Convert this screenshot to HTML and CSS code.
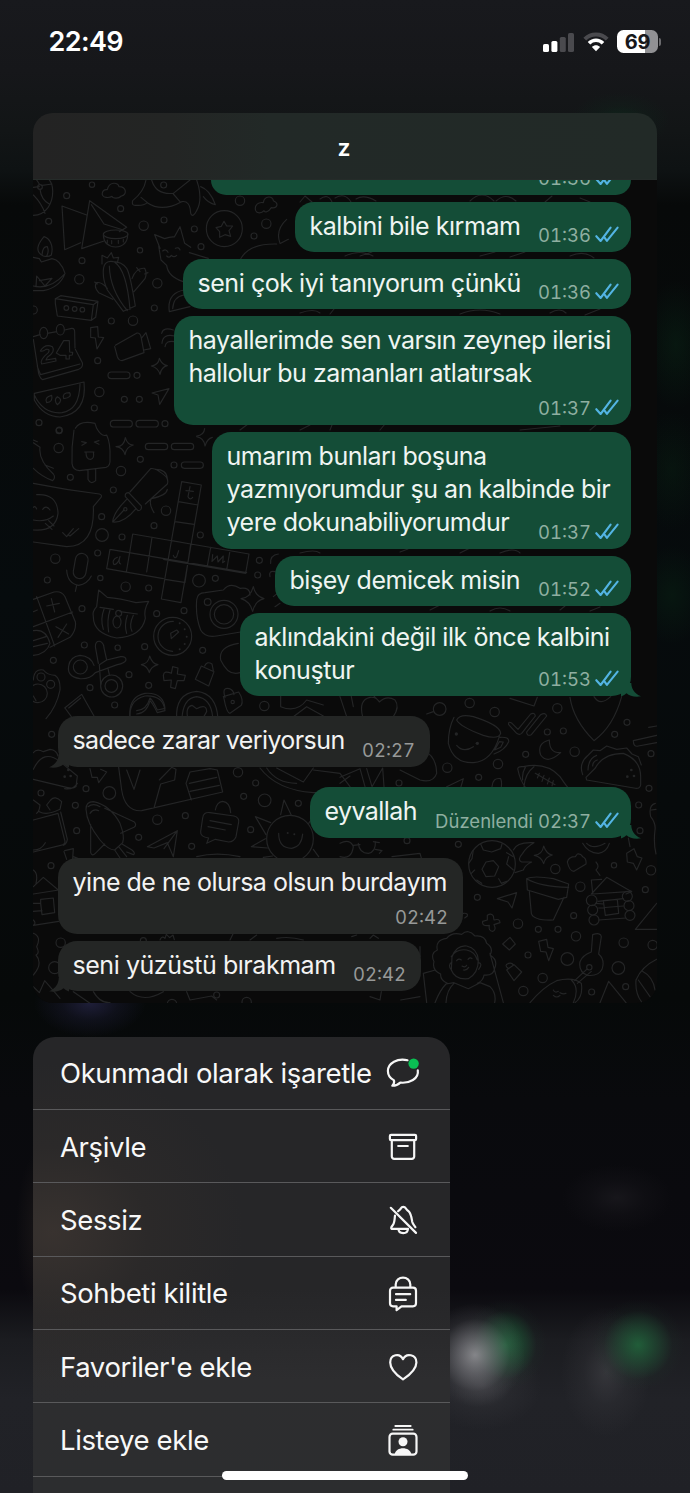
FILE: index.html
```html
<!DOCTYPE html>
<html lang="tr">
<head>
<meta charset="utf-8">
<title>Sohbet</title>
<link rel="stylesheet" href="styles.css">
</head>
<body>
<svg class="defs" width="0" height="0">
  <defs>
    <symbol id="ticks" viewBox="0 0 24 17"><path d="M1.3 10.2 5.6 15 15.6 1.6M9.6 11.6l2.3 3.2L22.6 1.6" fill="none" stroke="#53b4e3" stroke-width="2.1" stroke-linecap="round" stroke-linejoin="round"/></symbol>
    <symbol id="tail" viewBox="0 0 20 24"><path d="M0 10H10.300C10.300 15 13 20.500 20 23.300 14 24.500 8.500 23 5.500 20.200 3 22.500 0 23.500 0 23.500Z"/></symbol>
  </defs>
</svg>
<div class="screen">
  <header class="status">
    <span class="clock">22:49</span>
    <span class="indicators">
      <svg width="31" height="20" viewBox="0 0 31 20"><g fill="#fff"><rect x="0" y="12" width="6" height="8" rx="1.600"/><rect x="8.400" y="9" width="6" height="11" rx="1.600"/></g><g fill="#4a4a4e"><rect x="16.800" y="5" width="6" height="15" rx="1.600"/><rect x="25" y="1" width="6" height="19" rx="1.600"/></g></svg>
      <svg class="wifi" width="26" height="20" viewBox="0 0 26 20" fill="none"><path d="M1.800 7.200C8 .9 18 .9 24.200 7.200" stroke="#4a4a4e" stroke-width="4"/><path d="M6 11.300c4-4 10-4 14 0" stroke="#fff" stroke-width="3.600"/><path d="M8.900 14.900c2.400-2.100 5.800-2.100 8.200 0L13 19.300Z" fill="#fff"/></svg>
      <span class="battery"><span>69</span></span><i class="nub"></i>
    </span>
  </header>

  <section class="preview">
    <h1 class="title">z</h1>
    <div class="chat">
      <svg class="wallpaper" viewBox="33 180 624 823" width="624" height="823">
        <g id="doodles" class="ink">
          <g transform="translate(30 180) scale(.33333)">
            <path d="M10 106C48 105 70 70 68 30Q67 10 58 0M10 45Q35 70 45 100M10 22 28 20M35 16Q50 15 66 12M30 28Q34 60 58 72M28 12 20 0"/><circle cx="30" cy="21" r="7"/>
            <path d="M228 52C210 50 215 27 232 29 237 5 265 5 267 20 290 20 292 45 274 48 265 58 248 55 246 49 240 53 235 53 228 52Z"/>
            <path d="M348 0Q342 35 308 62Q304 78 318 76Q340 78 352 68Q395 98 455 65Q480 60 482 100Q488 115 500 92Q516 65 506 20L500 0M333 52 355 70M365 0Q378 45 430 40L480 0M430 42 450 65M512 20Q540 30 556 74Q535 70 520 50"/>
            <path d="M96 78 104 209 152 188M96 78 170 105M179 62 155 206 222 183M179 62 290 142 268 155M184 74 222 132 280 150"/><ellipse cx="257" cy="163" rx="37" ry="13"/><path d="M220 166Q222 200 257 201 292 198 293 164M232 180v8M245 182v9M265 181v9M280 178v8"/>
            <circle cx="583" cy="146" r="54"/><path d="m582 124 8 14 18 0-11 14 5 17-17-5-16 8 0-17-11-12 16-4Z"/>
            <path d="M390 205 374 164 404 176Q420 170 433 171L450 140 464 190 482 202M386 198 393 240 410 256Q414 290 460 305M478 218 535 235M398 213q10-8 16 4M436 205q10-5 14 5M410 228q8 8 14-2 8 8 16 0"/>
            <path d="M677 92C672 75 686 65 700 68 703 45 730 48 730 62 748 70 742 86 724 83 714 98 705 98 702 92 694 102 680 100 677 92Z"/>
            <path d="M40 228C12 215 25 190 42 170 58 175 72 195 64 225Q55 232 40 228ZM36 225Q38 198 52 200 58 215 50 228M10 232 28 236 34 246 66 236Q92 240 105 280 90 322 40 332H10M10 318Q60 330 102 284M18 320 20 288 45 318 66 295 28 302"/>
            <path d="M216 252V226L232 234 244 218 250 234 266 232 262 248M220 270Q222 240 250 245 275 245 290 265 300 280 316 378L280 394 232 330Q218 300 220 270M238 258Q240 330 292 392M254 247Q290 270 300 388M306 296Q318 262 344 265 352 280 345 296L312 335M248 358 206 338Q190 320 200 308 215 305 232 325M330 275l-10-12M344 282l10-4M202 312l-8-6"/>
            <path d="M76 370 82 408 184 421 190 374 76 356ZM76 356 92 347 204 364 197 412 184 421M190 374 204 364"/><circle cx="109" cy="384" r="7"/><circle cx="134" cy="387" r="7"/><circle cx="157" cy="389" r="7"/>
            <path d="M10 470 30 464M52 460 80 455M104 450 125 445Q135 444 134 460L135 504M10 478 24 568Q26 592 38 599L146 568Q160 562 157 548L136 508M22 560 32 584 150 552"/><ellipse cx="41" cy="459" rx="12" ry="17"/><ellipse cx="91" cy="449" rx="12" ry="16"/>
            <path d="M31 513Q45 490 67 500 78 515 52 532L48 540 77 535 78 543 35 552Q28 540 55 518 62 506 48 508 38 516 31 513ZM90 526 79 519 101 482H118L119 516 128 517 127 525 118 526V537H108V526Z"/>
            <path d="m182 443 21-3 2 31 16 2-20 34-5-33-14-2ZM256 496 321 459Q330 458 333 470L342 518 276 542Q266 542 262 530L254 500M334 475 348 458 362 506 342 510M364 558q22-4 24-23 8 20 24 22-18 4-22 26-6-20-26-25Z"/>
            <rect x="234" y="576" width="66" height="20" rx="10"/><rect x="241" y="721" width="66" height="20" rx="10"/><rect x="318" y="721" width="67" height="20" rx="10"/>
            <path d="m366 639 51-13-28 47-5-28ZM13 640 162 606Q172 700 90 711 40 710 13 660ZM13 645Q40 703 96 698 148 690 150 612M50 668q-8-16 15-22 5 20-15 22ZM82 674q-12-15 0-24 20 10 0 24ZM101 656q-6-18 18-18 8 15-18 18Z"/>
            <path d="M418 395Q410 340 462 330M418 395 480 380M428 386Q430 350 462 345M395 460Q400 440 430 450M396 490Q398 460 434 468M405 500Q408 480 434 485M750 190Q735 150 770 118M752 190 775 178M628 245Q650 190 740 192"/>
            <circle cx="186" cy="14" r="8"/><circle cx="401" cy="15" r="9"/><circle cx="110" cy="47" r="9"/><circle cx="272" cy="86" r="9"/><circle cx="56" cy="124" r="9"/><circle cx="341" cy="137" r="14"/><circle cx="402" cy="120" r="9"/><circle cx="493" cy="147" r="9"/><circle cx="630" cy="62" r="14"/><circle cx="709" cy="131" r="14"/><circle cx="672" cy="168" r="9"/><circle cx="513" cy="200" r="9"/><circle cx="330" cy="211" r="8"/><circle cx="156" cy="242" r="9"/><circle cx="148" cy="298" r="14"/><circle cx="382" cy="310" r="14"/><circle cx="373" cy="384" r="9"/><circle cx="10" cy="390" r="12"/><circle cx="309" cy="422" r="14"/><circle cx="244" cy="423" r="9"/><circle cx="203" cy="542" r="9"/><circle cx="321" cy="586" r="9"/><circle cx="208" cy="636" r="14"/><circle cx="283" cy="658" r="9"/><circle cx="328" cy="658" r="9"/><circle cx="193" cy="684" r="9"/><circle cx="27" cy="728" r="9"/><circle cx="88" cy="750" r="9"/><circle cx="405" cy="731" r="9"/>
          </g>
          <g transform="translate(30 430) scale(.33333)">
            <path d="M132 0Q124 50 126 100 128 120 148 122L228 112Q242 108 240 85 242 40 230 15 215 22 200 -5L195 -20Q150 -30 136 -5M174 120V148Q182 165 197 152V117M155 35l14 3-13 8M207 32l-14 4 14 7M164 66h28M168 68q0 20 14 20 12-2 8-22"/>
            <path d="M10 38 30 52Q25 90 70 132 78 142 68 152 35 140 10 115M45 105 70 115M10 30 22 35"/>
            <path d="m258 50q24 1 28-27 6 22 24 22-22 6-25 29-6-22-27-24ZM500 18q22-2 24-22M500 20q22 4 25 28 6-22 22-26"/>
            <rect x="346" y="40" width="67" height="19" rx="9"/><rect x="424" y="40" width="67" height="19" rx="9"/><rect x="454" y="96" width="66" height="19" rx="9"/>
            <path d="M10 160Q110 180 208 192 220 196 210 206L190 230Q195 350 110 350L10 336M20 194Q82 190 84 250 78 305 10 300M10 232q6-6 10 5M38 238q10-14 22 2M10 270Q45 278 70 258M46 280l20 18M56 272l16 16M98 308l12 12 20-24M114 314l6 4 26-22"/>
            <path d="M300 186 362 116Q376 112 408 140 416 150 412 162L346 222M286 200Q284 188 296 188L334 228Q336 242 324 242ZM290 208Q250 248 248 276 282 280 318 236M250 274 282 240M376 118Q410 118 412 146M412 178Q410 196 364 206 355 220 372 248"/><circle cx="286" cy="238" r="5"/>
            <path d="M455 155 514 165 453 518 394 507ZM445 215 504 225M435 275 492 283M425 332 482 342M405 448 463 457M308 312 657 372 647 430 400 388M308 312 299 368M366 322 350 426M240 358 650 428M240 358 230 416 400 446M299 368 289 426M542 352 532 408M600 362 590 420M482 342 465 457"/>
            <path class="fine" d="M480 170 474 200Q480 212 488 202M468 182 490 184M446 362 440 380Q434 388 430 376M262 382Q244 390 252 404 264 404 270 380 264 400 272 402M548 374 546 394 562 378 564 396 580 378 578 398 584 394"/>
            <rect x="133" y="370" width="38" height="76" rx="19" transform="rotate(10 152 408)"/><path d="M110 420Q112 460 146 466 172 462 184 438M140 466 136 484"/>
            <path d="M200 530 206 480 232 502Q270 505 318 518L356 514Q340 540 346 565 335 620 260 624 190 610 190 560 186 545 200 530ZM210 532 250 538M270 545 322 552M222 538q-12 30-2 60M240 540q-10 30-4 66M292 556q-10 30-2 54M310 556q-14 30-4 48"/><circle cx="266" cy="550" r="9"/><ellipse cx="261" cy="576" rx="12" ry="18"/>
            <path d="M10 508 72 486Q95 482 105 500L136 575Q140 600 120 622L60 652M20 500 74 648M10 590 128 546M50 528 88 520M64 506 74 546M78 590 116 612M110 582 84 622M10 545 22 540M10 602Q48 595 60 640 50 672 10 676M10 632 48 620M10 650 52 640"/>
            <circle cx="428" cy="619" r="57"/><path d="M430 574A45 45 0 1 0 428 664M424 626 422 610 440 600 446 606Z"/><g class="dot"><circle cx="449" cy="580" r="3"/><circle cx="464" cy="598" r="3"/><circle cx="470" cy="620" r="3"/><circle cx="464" cy="642" r="3"/><circle cx="449" cy="658" r="3"/></g>
            <path d="M500 510Q502 488 525 488L580 480Q600 455 630 475 660 470 660 495M500 510Q496 560 512 600 525 624 560 618L632 606M633 506q28-2 37-36 6 28 32 36-26 6-34 38-8-30-35-38Z"/><circle cx="582" cy="553" r="42"/><circle cx="582" cy="553" r="29"/><circle cx="533" cy="516" r="10"/>
            <path d="M205 700 196 650Q196 632 210 634 222 640 222 654L230 690 272 680Q288 678 288 690 284 700 262 704L196 728Q180 748 150 746 110 740 116 708 120 680 150 676 182 678 192 706M230 690 208 704 212 762M234 716 238 734"/><circle cx="151" cy="711" r="21"/><circle cx="245" cy="768" r="33"/><circle cx="244" cy="768" r="19"/>
            <path d="M334 704q22-4 25-26 8 24 25 26-22 6-26 24-6-20-24-24ZM400 736q2-16 24-6l4-20 16 4-2 18 24 4-4 16-20 0-6 24-14-4 2-22-22 2Z"/>
            <path d="M514 708 552 725 536 768 496 748ZM524 708Q530 692 546 702L550 722M548 500M572 690Q565 650 625 640M572 690Q595 740 630 728M580 800 626 786Q642 810 634 826L600 850Q590 850 582 806ZM585 802Q575 770 598 776 610 780 612 794"/><circle cx="608" cy="816" r="5"/>
            <path d="M10 750Q12 715 40 720 52 735 75 736 92 748 90 780 80 830 48 866M10 798 18 812"/><circle cx="33" cy="741" r="12"/><circle cx="62" cy="763" r="12"/><circle cx="24" cy="790" r="28"/>
            <path d="M104 834 155 793 192 858M116 834 152 804M105 834 130 868M300 868Q295 810 345 798 400 795 405 842L382 848Q368 820 360 812 350 850 320 852M440 868Q435 790 500 784 560 790 564 868M456 868Q458 805 500 800 542 805 548 860M474 868Q465 830 486 826L500 836Q530 820 530 845L518 866"/>
            <circle cx="86" cy="54" r="14"/><circle cx="87" cy="2" r="9"/><circle cx="331" cy="88" r="9"/><circle cx="273" cy="123" r="14"/><circle cx="432" cy="105" r="9"/><circle cx="121" cy="142" r="9"/><circle cx="250" cy="180" r="9"/><circle cx="408" cy="242" r="14"/><circle cx="215" cy="260" r="9"/><circle cx="372" cy="287" r="9"/><circle cx="216" cy="315" r="19"/><circle cx="276" cy="321" r="9"/><circle cx="511" cy="315" r="9"/><circle cx="203" cy="369" r="9"/><circle cx="76" cy="386" r="14"/><circle cx="52" cy="450" r="9"/><circle cx="211" cy="444" r="8"/><circle cx="287" cy="470" r="14"/><circle cx="356" cy="474" r="9"/><circle cx="507" cy="452" r="19"/><circle cx="556" cy="445" r="9"/><circle cx="688" cy="391" r="9"/><circle cx="683" cy="435" r="9"/><circle cx="156" cy="536" r="9"/><circle cx="380" cy="551" r="9"/><circle cx="462" cy="542" r="9"/><circle cx="163" cy="645" r="9"/><circle cx="263" cy="653" r="8"/><circle cx="344" cy="650" r="9"/><circle cx="518" cy="661" r="9"/><circle cx="70" cy="691" r="9"/><circle cx="297" cy="734" r="9"/><circle cx="180" cy="773" r="9"/><circle cx="356" cy="766" r="9"/><circle cx="254" cy="825" r="9"/><circle cx="703" cy="828" r="14"/>
            <path d="M722 400Q720 375 745 372M720 440Q715 420 735 425M730 500 745 488M735 530 750 520"/>
          </g>
        </g>
        <g class="right-copy"><use href="#doodles" x="563"/></g>
        <g class="ink" transform="translate(30 690) scale(.33333)">
          <path d="M10 188Q20 175 40 185L60 178Q80 180 84 198M10 238Q40 175 90 215L142 258 138 290Q130 298 110 292L10 268M104 296Q130 300 142 280M180 236 186 262 202 262 206 278 230 246 212 238M266 232 275 300Q285 365 335 362L578 306 562 240 540 236 480 246 468 280 484 330M290 240 312 298 330 240M388 270 425 232 438 238 434 270 392 282 372 354M478 280 560 262M480 304 568 286M10 330 30 345Q28 365 20 370M28 365Q50 378 90 358L95 335Q75 315 62 330L50 345 60 360M10 390 84 370 104 450Q108 464 92 466L10 486M92 366 112 448Q110 462 100 466M10 480Q34 480 46 458"/>
          <path d="M168 358Q168 335 190 335 240 345 270 400 285 440 278 458L254 480Q235 480 210 450 170 400 168 358ZM180 370Q190 355 206 362M174 350Q190 338 210 350M224 355 312 395Q322 405 312 412L272 430M182 404V488Q186 500 196 490L224 462M254 480 270 504M266 470 290 500M276 462 306 480Q318 490 310 494L290 486"/>
          <path d="m352 470 90-48-12 78-18-42-40 16ZM442 422 402 476M518 384Q520 365 540 368L612 378Q628 382 626 396L618 440Q612 455 596 456L556 448 530 460 536 444Q510 440 512 424ZM540 392 604 404M534 410 586 420M556 360Q560 336 578 334 600 336 602 368"/>
          <circle cx="780" cy="446" r="70"/><path d="M746 430Q746 475 785 475 815 470 818 432M752 374 762 330 784 376M722 398 676 380 708 434M706 446 664 470 712 474M836 400 850 380M728 498 700 502M850 478 866 500"/><g class="dot"><circle cx="773" cy="429" r="3"/><circle cx="793" cy="433" r="3"/></g>
          <path d="M690 234Q740 300 850 308H930M710 234Q740 280 800 280M740 234 820 276 850 234M850 240 930 250 960 290M500 500Q560 485 630 500M104 482 130 476 128 506M102 485 110 508M130 500 145 506M10 540Q25 550 18 580M10 590 40 562 85 600M10 612 86 600M10 640 32 640 32 628 70 624 74 668 36 674 32 640M10 664 36 662M10 690Q20 700 10 706L86 694M10 730Q35 740 20 770 30 790 18 795 40 820 10 855M10 890 28 908 44 872 90 925M130 905 180 940M190 905Q210 940 240 938M300 905Q340 940 400 905M470 905 480 930 545 918 560 930M600 750 610 730M660 750 680 735M740 745Q780 738 820 750M390 750q5-14 15-5l4-12 10 10 10-8 4 14"/>
          <path d="M300 80Q295 20 345 10 400 6 405 55L382 60Q368 30 360 24 350 60 320 62M752 18V50Q800 70 830 30L880 45M790 80 830 50 880 78"/>
          <circle cx="65" cy="133" r="9"/><circle cx="33" cy="309" r="9"/><circle cx="168" cy="296" r="9"/><circle cx="238" cy="309" r="19"/><circle cx="136" cy="346" r="9"/><circle cx="140" cy="422" r="9"/><circle cx="382" cy="389" r="14"/><circle cx="466" cy="377" r="9"/><circle cx="326" cy="442" r="9"/><circle cx="485" cy="469" r="9"/><circle cx="624" cy="247" r="14"/><circle cx="677" cy="279" r="9"/><circle cx="641" cy="319" r="9"/><circle cx="704" cy="331" r="19"/><circle cx="805" cy="340" r="9"/><circle cx="662" cy="419" r="9"/><circle cx="63" cy="527" r="9"/><circle cx="92" cy="758" r="14"/><circle cx="74" cy="833" r="18"/><circle cx="340" cy="752" r="9"/><circle cx="426" cy="942" r="14"/><circle cx="650" cy="936" r="14"/><circle cx="560" cy="915" r="9"/>
          <g class="dot"><circle cx="115" cy="240" r="4"/><circle cx="104" cy="260" r="4"/><circle cx="122" cy="258" r="4"/></g>
        </g>
        <g class="ink" transform="translate(340 690) scale(.33333)">
          <path d="M68 80Q55 30 90 22 108 20 118 36 140 15 165 30 180 50 160 80M92 8 118 35M30 0 40 50M0 20 20 80M260 72 280 65"/>
          <path d="M350 90Q360 70 400 80 480 105 482 130 475 150 430 136 360 110 350 90ZM342 82Q325 115 325 160 340 220 400 218 455 215 478 140M480 142Q508 140 506 155 495 180 462 192M478 155 490 156 482 172 464 180ZM350 166Q370 190 400 170"/>
          <path d="M506 104Q504 92 516 100L534 118 572 72Q584 66 586 78L545 130Q538 136 530 130ZM560 126 602 74Q616 66 620 78L574 134Q560 140 560 126ZM628 150Q590 160 602 195 622 224 662 188 628 190 628 150M510 25 582 48 592 22M690 22Q700 90 762 152 820 110 845 20M762 20Q780 50 812 20"/>
          <path d="M926 112 950 108M880 152 950 136M880 152Q880 172 895 168L950 158"/>
          <path d="M728 254Q715 220 745 195L760 180 780 182 800 168 830 178 860 174 876 192 895 200 904 225M738 262 766 234Q790 190 850 190 902 210 902 260V285Q900 298 882 294L740 270ZM744 240Q745 205 770 196M758 228Q758 214 772 210"/>
          <path d="M534 240Q530 228 550 230 620 215 660 260 680 290 690 300M534 240Q540 270 555 290M556 232Q545 250 548 270M582 230Q555 250 552 290M586 250 645 284M598 250l-6 14M612 256l-6 18M628 264l-6 18M640 272l-4 16M250 180Q290 200 290 250 280 280 240 270L180 240M320 290 370 266 360 300M456 290Q458 262 482 266 486 275 484 290M0 262 60 236 75 290M80 236 96 290 128 234 132 290M0 280 30 258"/>
          <circle cx="456" cy="522" r="70"/><path d="M438 516 460 512 476 530 464 558 438 560 426 538ZM422 462 430 480 455 486 482 476 486 462M400 480 396 506 386 520M404 540 394 550M410 570 425 580M500 488 520 500M506 500 500 522 520 540M476 566 484 580 500 574M520 480Q530 455 582 458 560 470 548 490 530 510 545 516H575Q555 525 550 540L525 548M583 496q24-2 28-28 8 24 26 27-22 6-26 26-6-20-28-25M682 516Q686 500 706 500L712 492Q722 490 728 500 740 505 738 522L702 544Q688 544 682 516ZM728 460Q745 490 775 490 800 486 808 460M740 460Q760 480 795 460M865 444 870 470M860 490 882 476 892 500 906 504 890 540 880 520 862 516ZM768 516Q780 530 768 540L780 556M946 340Q925 345 932 380 948 400 945 420 940 460 948 492M934 360 948 358"/>
          <path d="M560 566Q580 556 640 566L686 582 680 622 655 628 562 600 560 566Q600 590 686 592M568 604 574 670Q580 692 640 690L672 622M472 626 530 608 516 654 504 636ZM428 694 442 690 442 676Q454 668 460 678L462 690Q480 685 480 698L462 704Q470 720 458 724 445 724 448 706 425 710 428 694Z"/>
          <path d="M754 612 800 562 875 605 858 612M754 570 785 568M754 570 758 610M758 612 875 604M774 634 850 626M776 654 850 648M766 640 790 642M790 632 832 628 836 670 796 676ZM776 690 858 684"/><circle cx="755" cy="631" r="16"/><circle cx="758" cy="660" r="15"/><circle cx="762" cy="690" r="15"/><circle cx="862" cy="619" r="15"/><circle cx="867" cy="647" r="15"/><circle cx="870" cy="676" r="15"/>
          <path d="M950 640 886 718H950M510 742 526 762 508 780 488 762ZM596 754 620 748 624 772 640 776 626 812 618 786 602 784ZM500 840 522 824 545 846 522 872ZM506 836Q490 825 506 820 518 818 520 826M758 734Q782 726 784 740L776 792Q796 810 786 838 775 860 742 856 715 845 720 815 728 795 754 786ZM740 838 704 872M754 844 712 880M950 808Q905 830 888 870 885 910 905 936M905 842Q940 860 945 900M895 870 930 920M780 938 806 874 858 938M570 938Q610 890 650 872 700 860 724 880 730 920 705 938M694 870Q720 895 700 938M640 900q5 10 15 4M640 916q10 10 20 0M660 908q10 6 18 2"/><circle cx="748" cy="832" r="8"/>
          <path d="M322 880Q300 870 302 852 275 840 282 815 270 790 292 780 285 750 320 745 335 725 365 733 385 715 405 738 435 735 440 760 462 775 450 795 475 810 464 835 460 858 432 855 430 872 412 880M318 882 342 878 385 896 420 878 450 890Q470 910 464 938M318 882Q300 900 285 938M342 880Q320 900 318 938M450 790 490 938M336 800Q350 765 380 768 412 775 415 810 415 850 385 866 345 870 334 840ZM334 800Q350 775 380 780 405 785 412 810M350 812q6-8 14-2M384 808q6-8 12-2M366 828q10 6 14-2M370 840q10 2 16-8M336 816Q322 825 334 840M415 818Q430 820 416 838M250 850 286 840M250 850 260 938M240 770V800M90 920 120 930 124 905M182 930 240 920"/>
          <path d="M35 740 50 735M90 745 100 735 115 745M370 670q15-2 12 8l-8 6M0 500Q35 510 40 470 30 445 0 460M40 466 60 464M55 460Q58 490 85 490 108 485 106 455M106 478 126 482 118 490M100 455 118 458M156 500 240 490 244 504"/>
          <circle cx="299" cy="57" r="19"/><circle cx="389" cy="39" r="14"/><circle cx="464" cy="66" r="14"/><circle cx="652" cy="55" r="14"/><circle cx="622" cy="126" r="9"/><circle cx="670" cy="123" r="9"/><circle cx="704" cy="185" r="14"/><circle cx="824" cy="133" r="9"/><circle cx="861" cy="97" r="9"/><circle cx="933" cy="191" r="9"/><circle cx="557" cy="193" r="9"/><circle cx="474" cy="222" r="14"/><circle cx="322" cy="233" r="14"/><circle cx="416" cy="262" r="9"/><circle cx="177" cy="279" r="9"/><circle cx="927" cy="295" r="9"/><circle cx="896" cy="345" r="9"/><circle cx="900" cy="422" r="9"/><circle cx="355" cy="463" r="9"/><circle cx="201" cy="452" r="9"/><circle cx="646" cy="537" r="14"/><circle cx="822" cy="526" r="8"/><circle cx="933" cy="541" r="14"/><circle cx="721" cy="590" r="14"/><circle cx="412" cy="622" r="9"/><circle cx="916" cy="599" r="9"/><circle cx="701" cy="677" r="9"/><circle cx="534" cy="701" r="14"/><circle cx="595" cy="718" r="9"/><circle cx="654" cy="718" r="9"/><circle cx="708" cy="739" r="14"/><circle cx="851" cy="758" r="14"/><circle cx="938" cy="765" r="14"/><circle cx="564" cy="795" r="9"/><circle cx="682" cy="807" r="19"/><circle cx="835" cy="834" r="19"/><circle cx="608" cy="864" r="14"/><circle cx="857" cy="890" r="9"/><circle cx="755" cy="906" r="9"/><circle cx="550" cy="903" r="14"/>
          <g class="dot"><circle cx="349" cy="132" r="5"/><circle cx="412" cy="160" r="5"/><circle cx="874" cy="240" r="4"/><circle cx="862" cy="260" r="4"/><circle cx="882" cy="258" r="4"/></g>
        </g>
        <g class="ink">
          <path d="M300 202 305 196 312 202M320 199q8-6 12 3M335 198q10-6 16 4M356 199q8-5 20 2M470 201q12-12 24 0M496 201q10-9 20 0M545 202 552 196M580 198 590 202M345 256q15-7 28 0M360 256l12-4M480 256 495 252M510 257 525 252M570 256q14-6 24 2M300 313q14-5 20 0M330 314 334 309M460 314q20-8 40 0M550 313q10-6 16 0M585 315 600 309M240 430 248 424M300 430 310 425M330 430 332 425M380 430 385 424M520 430 560 426M590 430 596 425M300 553q15-4 20 0M400 552 408 549M460 553 470 548M500 553q14-6 20 0M430 610 440 605M490 611q10-6 20 0M560 610 565 606M590 611 600 607"/>
        </g>
      </svg>

      <div class="messages">
        <div class="bubble out cut"><span class="meta">01:36 <svg><use href="#ticks"/></svg></span></div>
        <div class="bubble out w1"><p>kalbini bile kırmam</p><span class="meta">01:36 <svg><use href="#ticks"/></svg></span></div>
        <div class="bubble out w2"><p>seni çok iyi tanıyorum çünkü</p><span class="meta">01:36 <svg><use href="#ticks"/></svg></span></div>
        <div class="bubble out stacked w3"><p>hayallerimde sen varsın zeynep ilerisi<br>hallolur bu zamanları atlatırsak</p><span class="meta">01:37 <svg><use href="#ticks"/></svg></span></div>
        <div class="bubble out w4"><p>umarım bunları boşuna<br>yazmıyorumdur şu an kalbinde bir<br>yere dokunabiliyorumdur</p><span class="meta">01:37 <svg><use href="#ticks"/></svg></span></div>
        <div class="bubble out w5"><p>bişey demicek misin</p><span class="meta">01:52 <svg><use href="#ticks"/></svg></span></div>
        <div class="bubble out last w6"><p>aklındakini değil ilk önce kalbini<br>konuştur</p><span class="meta">01:53 <svg><use href="#ticks"/></svg></span><svg class="tail"><use href="#tail"/></svg></div>
        <div class="bubble in last w7"><p>sadece zarar veriyorsun</p><span class="meta">02:27</span><svg class="tail"><use href="#tail"/></svg></div>
        <div class="bubble out last w8"><p>eyvallah</p><span class="meta">Düzenlendi 02:37 <svg><use href="#ticks"/></svg></span><svg class="tail"><use href="#tail"/></svg></div>
        <div class="bubble in stacked w9"><p>yine de ne olursa olsun burdayım</p><span class="meta">02:42</span></div>
        <div class="bubble in w10"><p>seni yüzüstü bırakmam</p><span class="meta">02:42</span><svg class="tail"><use href="#tail"/></svg></div>
      </div>
    </div>
  </section>

  <nav class="menu">
    <div class="item"><span>Okunmadı olarak işaretle</span>
      <svg viewBox="0 0 34 34"><path d="M21.500 3.200C11.500.8 1.900 6 1.900 14c0 4.600 2.700 7.600 6.100 9.400.5 2.200-.3 3.900-1.700 5.300 3.600.1 6-1.200 8-3.100 9 .9 18.800-3.600 17.500-12.200" /><circle cx="27.600" cy="6.600" r="5.200" class="badge"/></svg></div>
    <div class="item"><span>Arşivle</span>
      <svg viewBox="0 0 34 34"><rect x="3.900" y="4.900" width="26.200" height="5.200" rx="1.200"/><path d="M5.800 10.100V26.500a2.300 2.300 0 0 0 2.300 2.300H25.900a2.300 2.300 0 0 0 2.300-2.300V10.100M12.200 16H21.800"/></svg></div>
    <div class="item"><span>Sessiz</span>
      <svg viewBox="0 0 34 34"><path d="M4.800 4.800 30 29.900M12.100 8.200C13.300 6.900 14.300 6.600 14.900 5.200 15.900 3.300 18.700 3.300 19.700 5.200 20.300 6.700 21.300 7 22.600 8.200 25.500 11.200 25.600 15.500 26.200 18.800 26.800 21.100 28.500 22.600 29.400 24.200M9 12.600C8.500 16.200 8.800 20 6.500 22.500 5 24.300 4.600 25.800 6.400 25.900H22M12.500 26.200C12.700 31.300 21.600 31.400 21.900 26.200"/></svg></div>
    <div class="item"><span>Sohbeti kilitle</span>
      <svg viewBox="0 0 34 34"><path d="M9.700 10.700V7.600C9.700-1.600 24.300-1.600 24.300 7.600V10.700M7 10.700H27a3 3 0 0 1 3 3V26.300a3 3 0 0 1-3 3H15.500L10.600 33.200V29.300H7a3 3 0 0 1-3-3V13.700a3 3 0 0 1 3-3ZM10 17.200H24.200M10 22.900H19.800"/></svg></div>
    <div class="item"><span>Favoriler'e ekle</span>
      <svg viewBox="0 0 34 34"><path d="M17 29.400C12 26 4.200 19.900 4.200 12.400 4.200 4.500 13.800 2.400 17 9.200 20.200 2.400 30.400 4.500 30.400 12.400 30.400 19.900 22 26 17 29.400Z"/></svg></div>
    <div class="item"><span>Listeye ekle</span>
      <svg viewBox="0 0 34 34"><path d="M9.300 2H24.700M7.300 5.700H26.700" class="thin"/><rect x="3.500" y="9.700" width="27" height="20.900" rx="3.200"/><path class="solid" d="M8.600 30.500c1.200-8.200 15.600-8.200 16.800 0Z"/><circle cx="17" cy="17.800" r="4.500" class="solid"/></svg></div>
    <div class="item"></div>
  </nav>
  <div class="home"></div>
</div>
</body>
</html>
```

FILE: styles.css
```css
* { box-sizing: border-box; margin: 0; }
body { background: #090a0c; font-family: Inter, "Noto Sans", sans-serif; color: #fff; }
.defs { position: absolute; }
.screen {
  position: relative; width: 690px; height: 1493px; overflow: hidden;
  background:
    radial-gradient(ellipse 50px 52px at 475px 1355px, rgba(150,150,154,.85), rgba(125,125,130,.6) 35%, rgba(90,90,95,.2) 70%, transparent),
    radial-gradient(ellipse 42px 46px at 505px 1345px, rgba(30,105,60,.9), rgba(30,90,55,.5) 45%, rgba(30,60,45,.12) 75%, transparent),
    radial-gradient(ellipse 46px 46px at 638px 1345px, rgba(33,96,58,.95), rgba(33,85,55,.5) 45%, rgba(30,60,45,.12) 75%, transparent),
    radial-gradient(ellipse 45px 65px at 606px 1372px, rgba(68,68,73,.6), rgba(60,60,65,.25) 50%, transparent),
    radial-gradient(ellipse 60px 45px at 482px 1385px, rgba(75,75,80,.6), rgba(60,60,65,.25) 50%, transparent),
    radial-gradient(ellipse 55px 34px at 617px 1198px, rgba(26,25,30,.8), rgba(22,21,26,.4) 50%, transparent),
    radial-gradient(ellipse 24px 80px at 40px 1230px, rgba(40,34,32,.5), transparent),
    radial-gradient(ellipse 56px 34px at 90px 1003px, #1e1e38, rgba(26,26,48,.45) 50%, transparent),
    radial-gradient(ellipse 50px 28px at 620px 120px, rgba(14,45,30,.6), rgba(14,40,28,.25) 50%, transparent),
    radial-gradient(ellipse 34px 65px at 676px 345px, rgba(8,32,20,.6), transparent),
    radial-gradient(ellipse 34px 60px at 672px 470px, rgba(8,30,18,.5), transparent),
    radial-gradient(ellipse 34px 50px at 672px 595px, rgba(8,30,18,.6), transparent),
    linear-gradient(#18191d 0, #16171a 70px, #121516 130px, #0e1213 170px, #070909 205px, #060b0d 600px, #060909 1000px, #090a0d 1100px, #0b0a0f 1290px, #1b1c20 1340px, #212227 1400px, #202126 1493px);
}
.status { height: 113px; padding: 25px 30px 0 48.500px; display: flex; justify-content: space-between; align-items: flex-start; }
.clock { font-size: 27px; font-weight: 600; line-height: 33px; letter-spacing: -.6px; }
.indicators { display: flex; align-items: center; height: 33px; }
.wifi { margin-left: 9px; }
.battery { width: 41px; height: 23px; margin-left: 8px; border-radius: 6.500px; background: linear-gradient(90deg, #fff 68%, #919194 68%); color: #17181b; font-weight: 700; font-size: 20px; line-height: 24px; text-align: center; letter-spacing: -.3px; }
.nub { width: 2px; height: 8px; margin: 0 -1px 0 1px; border-radius: 0 3px 3px 0; background: #6b6b6e; }
.preview { margin: 0 33px; width: 624px; height: 890px; border-radius: 20px; overflow: hidden; }
.title { height: 67px; background: linear-gradient(90deg, #232323, #232524 22%, #222927 38%, #222a27); border-bottom: 1px solid #252b29; font-size: 23px; font-weight: 600; line-height: 71px; text-align: center; padding-right: 2px; }
.chat { position: relative; height: 823px; background: #0a0a0a; overflow: hidden; }
.wallpaper { position: absolute; inset: 0; }
.ink, .right-copy { fill: none; stroke: #242526; stroke-width: 1.100px; stroke-linejoin: round; stroke-linecap: round; }
.ink g, .ink[transform] { stroke-width: 3.500px; }
.right-copy { clip-path: polygon(593px 0, 690px 0, 690px 722px, 630px 722px, 630px 691px, 593px 691px); }
.dot { fill: #242526; stroke: none; }
.messages { position: relative; padding: 0 26px 0 25px; display: flex; flex-direction: column; gap: 7px; }
.bubble { position: relative; display: flex; justify-content: space-between; min-height: 50px; padding: 8px 15px 0 14.500px; border-radius: 19px; }
.bubble p { flex: 1 1 0; min-width: 0; white-space: nowrap; font-size: 25px; line-height: 33px; letter-spacing: -.45px; }
.out { background: #144d37; align-self: flex-end; color: #eff5f2; padding-right: 12px; }
.in { background: #242625; align-self: flex-start; color: #f3f3f3; }
.meta { display: flex; align-items: center; align-self: flex-end; gap: 4px; height: 20px; margin-bottom: 7px; font-size: 18.500px; font-variant-numeric: tabular-nums; letter-spacing: 0; white-space: nowrap; color: #8fafa1; }
.in .meta { color: #979998; }
.meta svg { width: 24px; height: 17px; position: relative; top: -1px; }
.cut { width: 420px; min-height: 15px; height: 15px; border-radius: 0 0 19px 19px; overflow: hidden; padding-top: 0; justify-content: flex-end; }
.stacked { flex-direction: column; }
.stacked p { flex: none; }
.stacked .meta { margin-top: 8px; }
.w1 { width: 336px; } .w2 { width: 448px; } .w3 { width: 457px; } .w4 { width: 419px; height: 117px; }
.w5 { width: 356px; } .w6 { width: 391px; height: 83px; } .w7 { width: 372px; height: 51px; }
.w8 { width: 321px; height: 51px; } .w9 { width: 405px; } .w10 { width: 363px; }
.w3 p, .w4 p, .w9 p { letter-spacing: -.49px; }
.w7 p, .w8 p { letter-spacing: -.58px; }
.last { margin-bottom: 13px; }
.tail { position: absolute; width: 20px; height: 24px; right: -9.500px; bottom: -.5px; fill: #144d37; }
.in .tail { right: auto; left: -9.500px; transform: scaleX(-1); fill: #242625; }
.menu { width: 417px; height: 457px; margin: 33.500px 0 0 33px; border-radius: 22px 22px 0 0; overflow: hidden; background: radial-gradient(ellipse 190px 170px at 20px 195px, #38322f, rgba(48,44,42,.5) 50%, transparent), linear-gradient(#262628, #262628 55%, #2d2d2f 75%, #2c2d2f); }
.item { height: 73.400px; padding: 0 30px 0 27px; display: flex; align-items: center; justify-content: space-between; border-bottom: 1px solid #59595b; font-size: 27.500px; letter-spacing: -.38px; color: #f8f8f8; }
.item span { white-space: nowrap; position: relative; top: .5px; }
.item svg { width: 34px; height: 34px; flex: none; fill: none; stroke: #f6f6f6; stroke-width: 2.200px; stroke-linecap: round; stroke-linejoin: round; overflow: visible; position: relative; top: 1px; }
.item .badge { fill: #0abf53; stroke: none; }
.item .solid { fill: #f6f6f6; stroke: none; }
.item .thin { stroke-width: 1.800px; }
.home { position: absolute; left: 222px; top: 1471px; width: 246px; height: 9px; border-radius: 5px; background: #fff; }
```
